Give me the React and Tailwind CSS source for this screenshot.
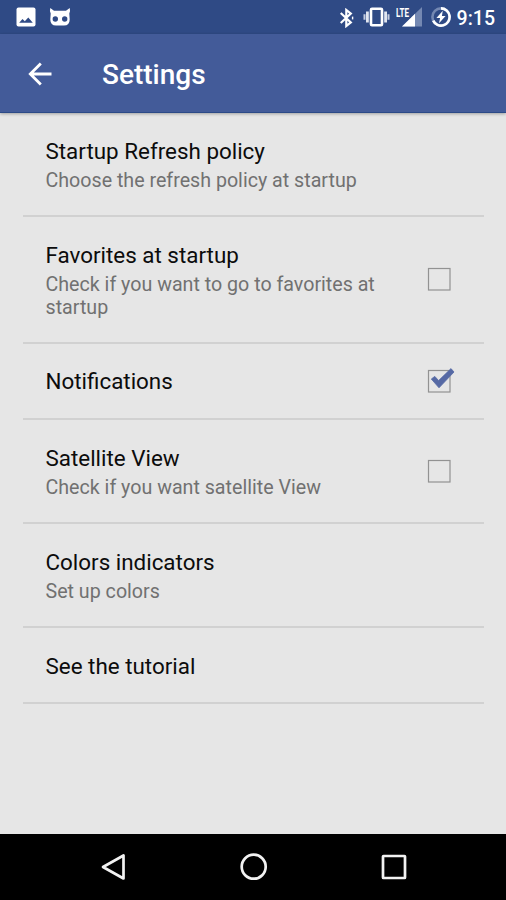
import React, { useState } from 'react'

const initialSettings = [
  { id: 'refresh', title: 'Startup Refresh policy', summary: 'Choose the refresh policy at startup', height: 'h-[103.5px]' },
  { id: 'favorites', title: 'Favorites at startup', summary: 'Check if you want to go to favorites at startup', checked: false, height: 'h-[127px]' },
  { id: 'notifications', title: 'Notifications', checked: true, height: 'h-[76.5px]' },
  { id: 'satellite', title: 'Satellite View', summary: 'Check if you want satellite View', checked: false, height: 'h-[104px]' },
  { id: 'colors', title: 'Colors indicators', summary: 'Set up colors', height: 'h-[104px]' },
  { id: 'tutorial', title: 'See the tutorial', height: 'h-[76px]' },
]

function StatusBar() {
  return (
    <div className="h-[34px] bg-[#2f4a85] flex items-center justify-between pl-4 pr-[11px] text-white">
      <div className="flex items-center gap-[13px]">
        <svg className="w-5 h-5" viewBox="0 0 20 20">
          <rect x="0.5" y="0.5" width="19" height="19" rx="2" fill="white" />
          <path d="M3.2 15.8 6.5 12 8.8 14.2 12.3 10.5 16.8 15.8Z" fill="#2f4a85" />
        </svg>
        <svg className="w-[22px] h-5" viewBox="0 0 22 20">
          <path d="M1.3 1 5 3.8H17L20.7 1Q21.5 3.4 20.3 6.5L20.7 12.5Q20.6 18.5 15 18.6H7Q1.4 18.5 1.3 12.5L1.7 6.5Q.5 3.4 1.3 1Z" fill="white" />
          <circle cx="6.3" cy="12" r="2.7" fill="#2f4a85" />
          <circle cx="15.7" cy="12" r="2.7" fill="#2f4a85" />
        </svg>
      </div>

      <div className="flex items-center">
        <svg className="w-[14px] h-5 mr-[9px] mt-px" viewBox="0 0 14 20" fill="none" stroke="white" strokeWidth="2.2">
          <path d="M.7 5 10.8 14.4 6.3 18V2L10.8 5.6.7 15" />
          <path d="M12.6 8.6V11.4" strokeWidth="1.4" />
        </svg>
        <svg className="w-[27px] h-5 mr-[7px]" viewBox="0 0 27 20" fill="none" stroke="white">
          <rect x="8" y="1.8" width="11" height="16.4" rx="1" strokeWidth="2.6" />
          <path d="M4.4 4.5V15.5M22.6 4.5V15.5" stroke="#e1e6f0" strokeWidth="2.8" />
          <path d="M1.5 7.2V12.8M25.5 7.2V12.8" stroke="#c5cde0" strokeWidth="2" />
        </svg>
        <div className="relative w-[25px] h-5 mr-[9px]">
          <svg className="w-full h-full" viewBox="0 0 25 20">
            <path d="M25 0V19.5H5Z" fill="#7488b2" />
            <path d="M18 6.8V19.5H5Z" fill="white" />
          </svg>
          <span className="absolute -left-[1px] -top-px h-[12px] w-[15px] bg-[#2f4a85] text-[13px] leading-[13px] font-bold">
            <span className="inline-block origin-left scale-x-[0.62]">LTE</span>
          </span>
        </div>
        <svg className="w-5 h-5 mr-1.5" viewBox="0 0 20 20">
          <circle cx="10" cy="10" r="8.6" fill="none" stroke="#7488b2" strokeWidth="2.6" />
          <path d="M10 1.4A8.6 8.6 0 1 1 2.2 13.6" fill="none" stroke="white" strokeWidth="2.6" />
          <path d="M11.8 3.8 5.4 11H9.1L8 16.2 14.6 9H10.9Z" fill="white" />
        </svg>
        <span className="text-[19.5px] leading-none font-medium pt-[3px]">9:15</span>
      </div>
    </div>
  )
}

function Checkbox({ checked }) {
  return (
    <svg className="w-[30px] h-[30px] shrink-0" viewBox="0 0 30 30">
      <rect x="1.5" y="4.5" width="21.5" height="21.5" fill="none" stroke="#929292" strokeWidth="1.2" />
      {checked && (
        <path d="M4.3 13 7.8 10.4 11.6 14.6 24 2.6 27 6 12 21.8Z" fill="#5669a4" stroke="#5669a4" strokeWidth="0.8" strokeLinejoin="round" />
      )}
    </svg>
  )
}

function SettingRow({ setting, onToggle }) {
  const hasCheckbox = setting.checked !== undefined

  return (
    <button
      onClick={() => hasCheckbox && onToggle(setting.id)}
      className={`${setting.height} w-full flex items-center justify-between border-b-2 border-[#d1d1d1] pl-[23px] pr-[27px] text-left`}
    >
      <div className="w-[345px] pt-[2px]">
        <div className="text-[22.4px] leading-[27px] text-[#0c0c0c]">{setting.title}</div>
        {setting.summary && (
          <div className="text-[19.65px] leading-[23px] text-[#717171] pt-[4px]">{setting.summary}</div>
        )}
      </div>
      {hasCheckbox && <Checkbox checked={setting.checked} />}
    </button>
  )
}

function NavigationBar() {
  return (
    <div className="h-[66.5px] bg-black flex items-center justify-between pl-[99px] pr-[97px]">
      <svg className="w-[30px] h-[30px]" viewBox="0 0 30 30" fill="none" stroke="#f2f2f2" strokeWidth="2.7">
        <path d="M4 15 24.5 3.5V26.5Z" strokeLinejoin="round" />
      </svg>
      <svg className="w-[30px] h-[30px]" viewBox="0 0 30 30" fill="none" stroke="#f2f2f2" strokeWidth="2.7">
        <circle cx="14.7" cy="14.7" r="12" />
      </svg>
      <svg className="w-[30px] h-[30px]" viewBox="0 0 30 30" fill="none" stroke="#f2f2f2" strokeWidth="2.7">
        <rect x="4" y="4" width="22" height="22" rx="0.5" />
      </svg>
    </div>
  )
}

export default function App() {
  const [settings, setSettings] = useState(initialSettings)

  const handleToggle = (id) => {
    setSettings(settings.map((s) => (s.id === id ? { ...s, checked: !s.checked } : s)))
  }

  return (
    <div className="w-full h-screen flex flex-col overflow-hidden bg-[#e6e6e6] font-[Roboto,sans-serif]">
      <StatusBar />

      {/* App bar */}
      <header className="h-[79px] bg-[#435b99] border-b border-[#2c4a87] shadow-[0_1px_3px_rgba(0,0,0,0.3)] flex items-center pl-7 text-white">
        <svg className="w-6 h-6 mt-px" viewBox="0 0 24 24" fill="none" stroke="white" strokeWidth="2.8">
          <path d="M23.5 12H2.5M12.8 1.5 2.3 12 12.8 22.5" />
        </svg>
        <h1 className="ml-[50px] pt-[4px] text-[28px] leading-none font-medium">Settings</h1>
      </header>

      <main className="flex-1 px-[22.5px]">
        {settings.map((setting) => (
          <SettingRow key={setting.id} setting={setting} onToggle={handleToggle} />
        ))}
      </main>

      <NavigationBar />
    </div>
  )
}
